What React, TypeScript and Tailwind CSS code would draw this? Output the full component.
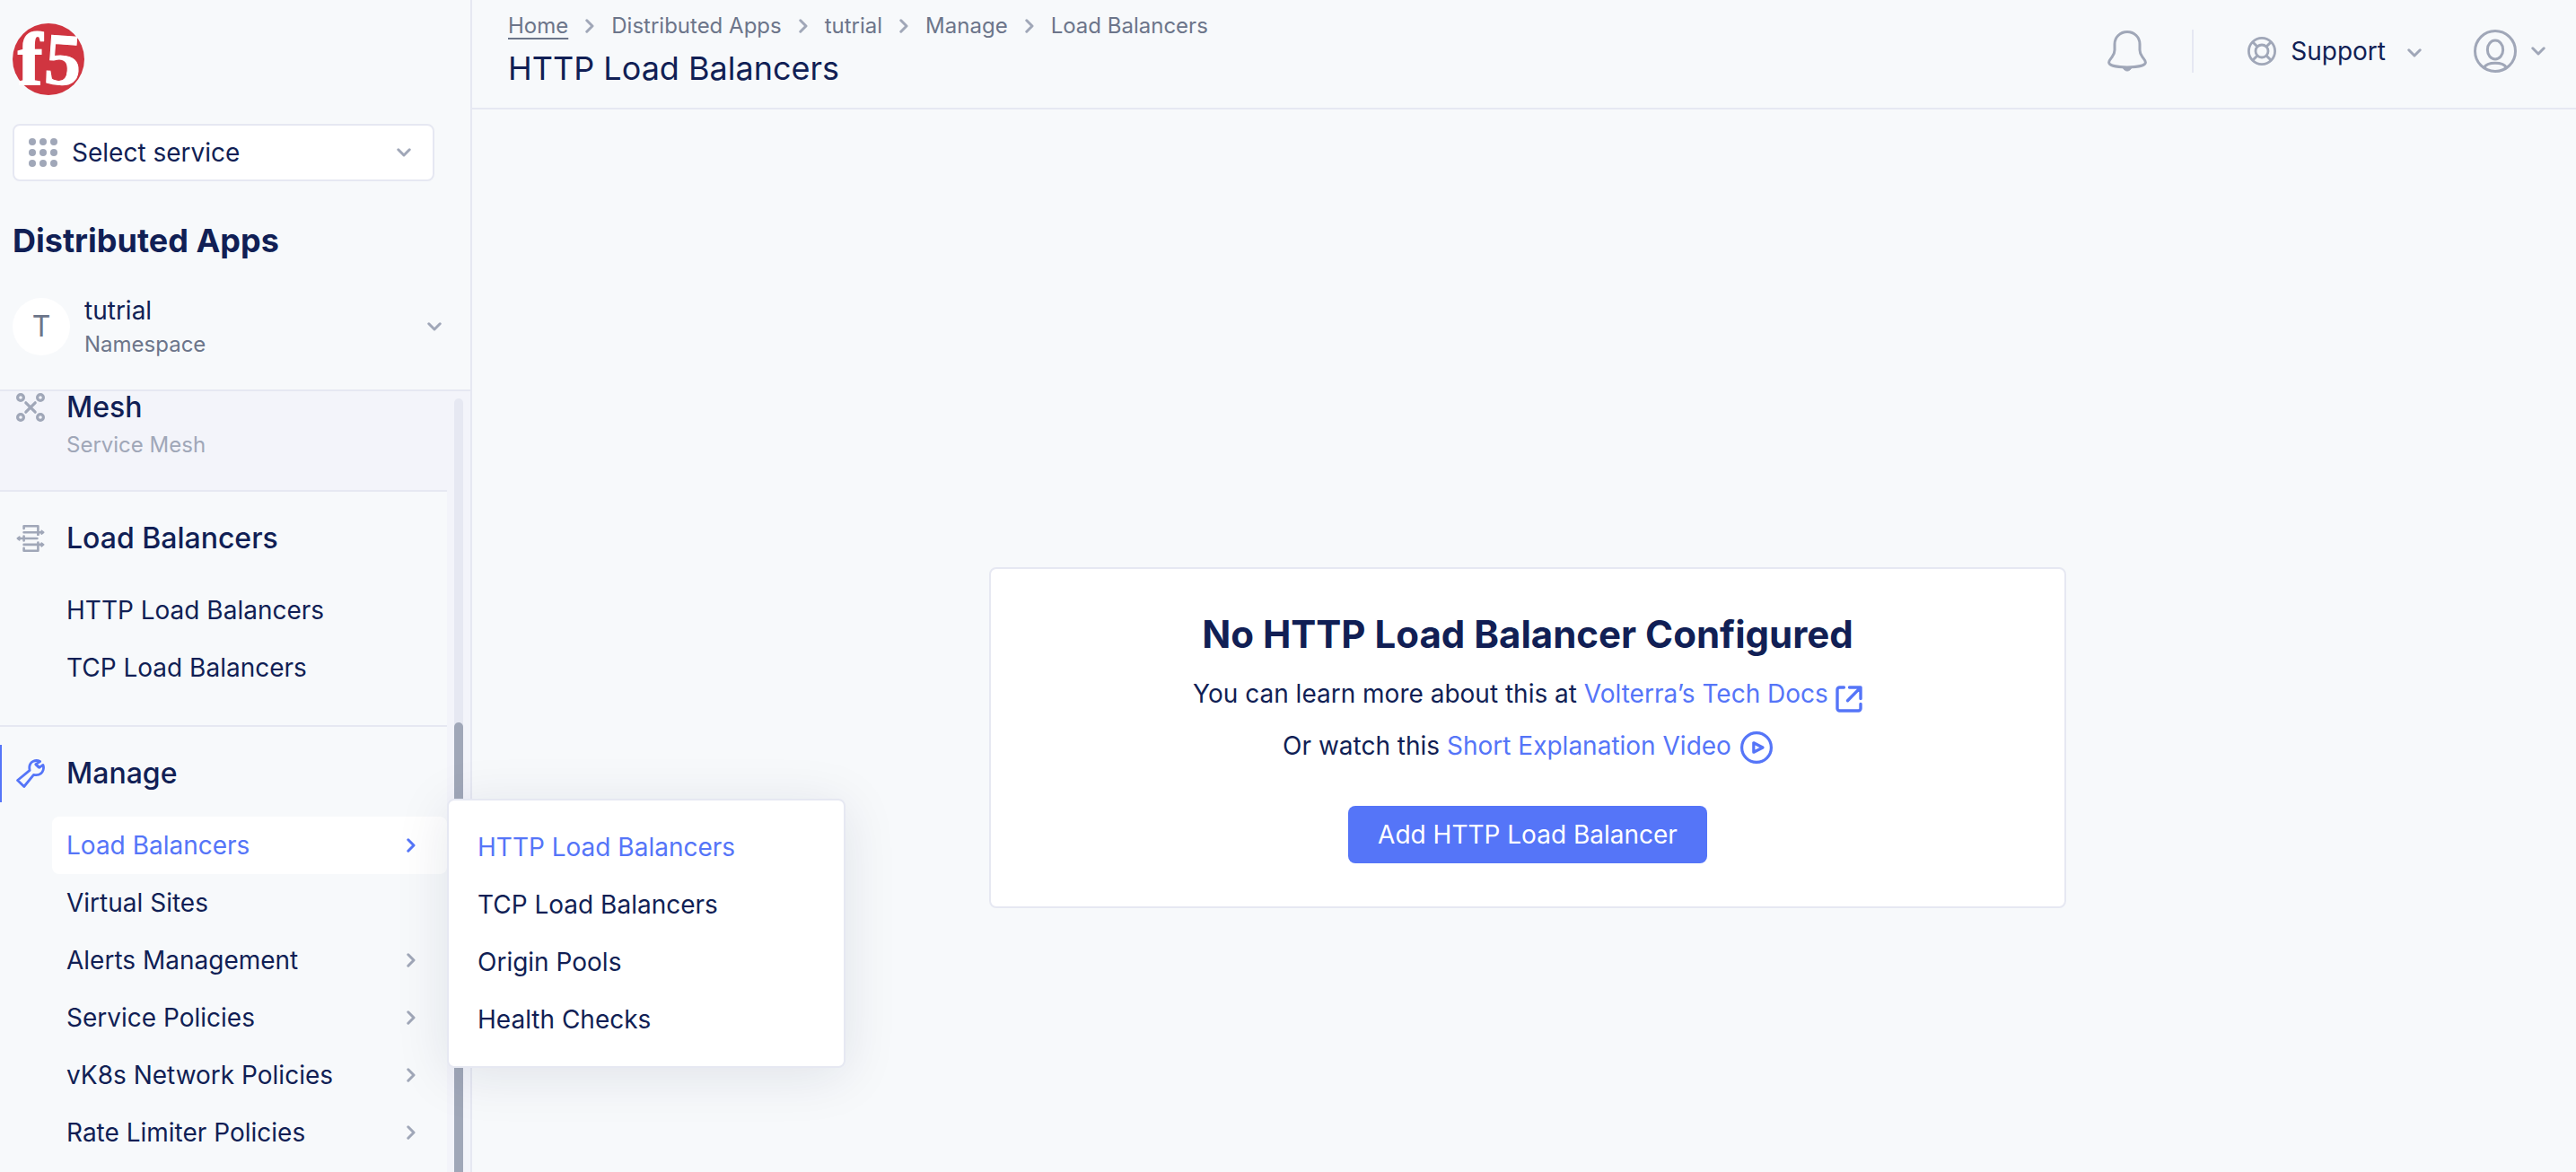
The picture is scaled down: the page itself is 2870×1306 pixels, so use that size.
import React from "react";

type IconProps = { className?: string };

function ChevronDown({ className = "" }: IconProps) {
  return (
    <svg viewBox="0 0 16 10" className={`h-[10px] w-4 shrink-0 ${className}`} fill="none" stroke="currentColor" strokeWidth="3" strokeLinecap="round" strokeLinejoin="round" aria-hidden="true">
      <path d="M1.8 1.8 8 8l6.2-6.2" />
    </svg>
  );
}

function ChevronRight({ className = "" }: IconProps) {
  return (
    <svg viewBox="0 0 10 16" className={`h-4 w-[10px] shrink-0 ${className}`} fill="none" stroke="currentColor" strokeWidth="3" strokeLinecap="round" strokeLinejoin="round" aria-hidden="true">
      <path d="M1.8 1.8 8 8l-6.2 6.2" />
    </svg>
  );
}

function Logo() {
  return (
    <svg viewBox="0 0 80 80" className="size-20 overflow-visible" role="img" aria-label="f5">
      <circle cx="40" cy="40" r="40" fill="#d03540" />
      <g fill="#fff" stroke="#fff" fontFamily="Liberation Serif, serif" fontWeight="700">
        <text x="6" y="68" fontSize="82" strokeWidth="2">f</text>
        <text x="36" y="68" fontSize="82" strokeWidth="1" transform="rotate(4 56 40)">5</text>
      </g>
    </svg>
  );
}

function GridDots() {
  const steps = [4, 16, 28];
  return (
    <svg viewBox="0 0 32 32" className="size-8 shrink-0 text-[#a0a7b8]" fill="currentColor" aria-hidden="true">
      {steps.map((y) => steps.map((x) => <circle key={`${x}-${y}`} cx={x} cy={y} r="4" />))}
    </svg>
  );
}

function MeshIcon({ className = "" }: IconProps) {
  return (
    <svg viewBox="0 0 32 32" className={`size-8 shrink-0 ${className}`} fill="none" stroke="currentColor" strokeWidth="3.2" strokeLinecap="round" aria-hidden="true">
      <circle cx="5" cy="5" r="3.4" />
      <circle cx="27" cy="5" r="3.4" />
      <circle cx="5" cy="27" r="3.4" />
      <circle cx="27" cy="27" r="3.4" />
      <path d="M10.8 10.8l10.4 10.4M21.2 10.8 10.8 21.2" />
    </svg>
  );
}

function BalancerIcon({ className = "" }: IconProps) {
  return (
    <svg viewBox="0 0 32 32" className={`size-8 shrink-0 ${className}`} fill="none" stroke="currentColor" strokeWidth="2.6" strokeLinecap="round" strokeLinejoin="round" aria-hidden="true">
      <path d="M8.6 5V2.3h15.8v9.4" />
      <path d="M8.6 9.2h20M24.4 9.2v2.6" />
      <path d="M3 16h20.4M8.6 13.6v4.8" />
      <path d="M8.6 22.9h20M24.4 20.6v9.1H8.6v-3" />
      <path d="M28.3 7.4 30.6 9.2l-2.3 1.8zM28.3 21.1l2.3 1.8-2.3 1.8zM3.7 14.2 1.4 16l2.3 1.8z" fill="currentColor" strokeWidth="1.8" />
    </svg>
  );
}

function WrenchIcon({ className = "" }: IconProps) {
  return (
    <svg viewBox="0 0 32 32" className={`size-8 shrink-0 ${className}`} fill="none" stroke="currentColor" strokeWidth="2.8" strokeLinejoin="round" aria-hidden="true">
      <path d="M26.600 2.600C22 .1 15.400 2.300 14.800 8.500c-.1 1.500 0 2.400.300 3.900L1.600 23.500l7.200 7L19.500 17.300c5 .9 9.200-.800 10.600-5.200.7-2.300.5-4.200-.2-5.700l-4.100 2.900-4-3.700z" />
      <path d="M21.600 5.400l4 4" />
    </svg>
  );
}

function BellIcon() {
  return (
    <svg viewBox="0 0 44 46" className="h-[46px] w-11" fill="none" stroke="currentColor" strokeWidth="3" strokeLinejoin="round" aria-hidden="true">
      <path d="M22 1.600c-8 0-14 6-14 13.600v6.500c0 3.500-.6 4.800-3 8C3.200 32 1.600 33.500 1.600 35.500c0 3.600 9.400 5.400 20.400 5.400s20.400-1.800 20.400-5.400c0-2-1.600-3.500-3.400-5.800-2.400-3.200-3-4.500-3-8v-6.500C36 7.600 30 1.600 22 1.600z" />
      <path d="M17 41.200c1.300 2.600 3 3.800 5 3.800s3.700-1.200 5-3.800z" fill="currentColor" strokeWidth="1" />
    </svg>
  );
}

function LifebuoyIcon() {
  return (
    <svg viewBox="0 0 32 32" className="size-8" fill="none" stroke="currentColor" strokeWidth="2.800" aria-hidden="true">
      <circle cx="16" cy="16" r="14.600" />
      <circle cx="16" cy="16" r="7" />
      <path d="M5.700 5.700l5.300 5.300M21 21l5.300 5.300M26.300 5.700 21 11M11 21l-5.300 5.300" strokeWidth="3" />
    </svg>
  );
}

function UserIcon() {
  return (
    <svg viewBox="0 0 48 48" className="size-12" fill="none" stroke="currentColor" strokeWidth="3" aria-hidden="true">
      <circle cx="24" cy="24" r="22.500" />
      <rect x="15.400" y="12" width="17.200" height="21" rx="8.600" ry="10" />
      <path d="M11.500 42.500c2-3.700 6.500-5.200 12.500-5.200s10.500 1.500 12.500 5.200" />
    </svg>
  );
}

function ExternalIcon() {
  return (
    <svg viewBox="0 0 30 30" className="size-[30px] shrink-0" fill="none" stroke="currentColor" strokeWidth="3.4" strokeLinecap="round" strokeLinejoin="round" aria-hidden="true">
      <path d="M9.400 2H4.500A2.500 2.500 0 0 0 2 4.500v21A2.500 2.500 0 0 0 4.500 28h21a2.500 2.500 0 0 0 2.500-2.500v-5M15.500 2H28v12.500M27.400 2.600 13.500 16.800" />
    </svg>
  );
}

function PlayIcon() {
  return (
    <svg viewBox="0 0 36 36" className="size-9 shrink-0" fill="none" stroke="currentColor" strokeWidth="3.200" strokeLinejoin="round" aria-hidden="true">
      <circle cx="18" cy="18" r="16.400" />
      <path d="M14.800 12.800v10.400L25 18z" />
    </svg>
  );
}

const crumbs = ["Home", "Distributed Apps", "tutrial", "Manage", "Load Balancers"];
const balancerItems = ["HTTP Load Balancers", "TCP Load Balancers"];
const manageItems = [
  { label: "Virtual Sites", nested: false },
  { label: "Alerts Management", nested: true },
  { label: "Service Policies", nested: true },
  { label: "vK8s Network Policies", nested: true },
  { label: "Rate Limiter Policies", nested: true },
];
const flyoutItems = ["HTTP Load Balancers", "TCP Load Balancers", "Origin Pools", "Health Checks"];

function SectionHeading({ icon, label, active = false }: { icon: React.ReactNode; label: string; active?: boolean }) {
  return (
    <div className={`flex h-16 items-center gap-6 border-l-2 pl-4 ${active ? "rounded-r-sm border-[#5575f8]" : "border-transparent"}`}>
      {icon}
      <h3 className="text-[32px] leading-10 font-medium">{label}</h3>
    </div>
  );
}

function Flyout() {
  return (
    <ul className="absolute top-[-20px] left-full z-10 w-[444px] rounded-lg border-2 border-[#e6e8f2] bg-white py-5 shadow-[0_8px_60px_rgba(20,30,70,0.10)]">
      {flyoutItems.map((item, i) => (
        <li key={item}>
          <a href="#" className={`flex h-16 items-center px-8 ${i === 0 ? "text-[#5575f8]" : ""}`}>{item}</a>
        </li>
      ))}
    </ul>
  );
}

function Sidebar() {
  return (
    <aside className="flex w-[526px] shrink-0 flex-col border-r-2 border-[#e6e8f2]">
      <div className="flex flex-col border-b-2 border-[#e6e8f2] pt-[26px] pr-8 pb-8 pl-[14px]">
        <Logo />
        <div className="mt-8 mr-2 flex h-16 items-center gap-4 rounded-lg border-2 border-[#e6e8f2] bg-white pr-6 pl-4">
          <GridDots />
          <select aria-label="Select service" className="min-w-0 flex-1 appearance-none bg-transparent leading-10 outline-none">
            <option>Select service</option>
          </select>
          <ChevronDown className="text-[#a0a7b8]" />
        </div>
        <h2 className="mt-11 text-[36px] leading-11 font-bold">Distributed Apps</h2>
        <button type="button" className="mt-9 flex items-center gap-4 text-left">
          <span className="flex size-16 items-center justify-center rounded-full bg-white text-[32px] text-[#6c758a]">T</span>
          <span className="flex flex-1 flex-col">
            <span className="leading-10">tutrial</span>
            <span className="text-[24px] leading-9 text-[#6c758a]">Namespace</span>
          </span>
          <ChevronDown className="text-[#a0a7b8]" />
        </button>
      </div>

      <div className="flex flex-1 bg-[#f3f4fa]">
        <nav className="flex flex-1 flex-col" aria-label="Workspace">
          <section className="flex gap-6 border-b-2 border-[#e6e8f2] pt-[2px] pb-7 pl-[18px]">
            <MeshIcon className="text-[#a0a7b8]" />
            <div>
              <h3 className="text-[32px] leading-8 font-medium">Mesh</h3>
              <p className="mt-1 text-[24px] leading-11 text-[#a0a7b8]">Service Mesh</p>
            </div>
          </section>

          <section className="border-b-2 border-[#e6e8f2] bg-[#f7f9fb] pt-5 pb-8">
            <SectionHeading icon={<BalancerIcon className="text-[#a0a7b8]" />} label="Load Balancers" />
            <ul className="mt-4">
              {balancerItems.map((item) => (
                <li key={item}>
                  <a href="#" className="flex h-16 items-center pl-[74px]">{item}</a>
                </li>
              ))}
            </ul>
          </section>

          <section className="flex-1 bg-[#f7f9fb] pt-5">
            <SectionHeading icon={<WrenchIcon className="text-[#5575f8]" />} label="Manage" active />
            <ul className="mt-4 pl-[58px]">
              <li className="relative">
                <a href="#" className="flex h-16 items-center justify-between rounded-lg bg-white pr-[35px] pl-4 text-[#5575f8]">
                  Load Balancers
                  <ChevronRight />
                </a>
                <Flyout />
              </li>
              {manageItems.map((item) => (
                <li key={item.label}>
                  <a href="#" className="flex h-16 items-center justify-between pr-[35px] pl-4">
                    {item.label}
                    {item.nested && <ChevronRight className="text-[#a0a7b8]" />}
                  </a>
                </li>
              ))}
            </ul>
          </section>
        </nav>
        <div className="flex flex-col px-2 pt-2">
          <div className="flex w-[10px] flex-1 flex-col rounded-t-full bg-[#e6e8f2] pt-[361px]">
            <div className="flex-1 rounded-t-full bg-[#a0a7b8]" />
          </div>
        </div>
      </div>
    </aside>
  );
}

function Header() {
  return (
    <header className="flex items-start justify-between border-b-2 border-[#e6e8f2] pr-[34px] pb-5 pl-10">
      <div className="pt-3">
        <nav aria-label="Breadcrumb">
          <ol className="flex items-center text-[24px] leading-[34px] text-[#6c758a]">
            {crumbs.map((crumb, i) => (
              <li key={crumb} className="flex items-center">
                {i > 0 && <ChevronRight className="mx-[19px] text-[#a0a7b8]" />}
                <a href="#" className={i === 0 ? "underline decoration-2 underline-offset-[5px]" : ""}>{crumb}</a>
              </li>
            ))}
          </ol>
        </nav>
        <h1 className="mt-[6px] text-[36px] leading-12">HTTP Load Balancers</h1>
      </div>
      <div className="mt-[33px] flex items-center text-[#a0a7b8]">
        <button type="button" aria-label="Notifications">
          <BellIcon />
        </button>
        <span className="ml-[50px] h-12 w-[2px] bg-[#e6e8f2]" />
        <button type="button" className="ml-15 flex items-center">
          <LifebuoyIcon />
          <span className="ml-4 text-[#111f55]">Support</span>
          <ChevronDown className="mt-1 ml-6" />
        </button>
        <button type="button" aria-label="Account" className="ml-[58px] flex items-center gap-4">
          <UserIcon />
          <ChevronDown />
        </button>
      </div>
    </header>
  );
}

function EmptyState() {
  return (
    <section className="flex w-full max-w-[1200px] flex-col items-center rounded-lg border-2 border-[#e6e8f2] bg-white pt-12 pb-12">
      <h2 className="text-[42px] leading-[50px] font-bold">No HTTP Load Balancer Configured</h2>
      <p className="mt-3 flex h-[58px] items-center">
        <span>You can learn more about this at&nbsp;</span>
        <a href="#" className="flex items-center gap-2 text-[#5575f8]">
          Volterra’s Tech Docs
          <span className="pt-3"><ExternalIcon /></span>
        </a>
      </p>
      <p className="flex h-[58px] items-center">
        <span>Or watch this&nbsp;</span>
        <a href="#" className="flex items-center gap-[10px] text-[#5575f8]">
          Short Explanation Video
          <span className="pt-1"><PlayIcon /></span>
        </a>
      </p>
      <button type="button" className="mt-[38px] h-16 rounded-lg bg-[#5575f8] px-[33px] text-white">Add HTTP Load Balancer</button>
    </section>
  );
}

export default function App() {
  return (
    <div className="flex min-h-screen bg-[#f7f9fb] font-['Inter',sans-serif] text-[28px] leading-10 text-[#111f55]">
      <Sidebar />
      <div className="flex min-w-0 flex-1 flex-col">
        <Header />
        <main className="flex flex-1 items-center justify-center pt-[216px] pl-2">
          <EmptyState />
        </main>
      </div>
    </div>
  );
}
